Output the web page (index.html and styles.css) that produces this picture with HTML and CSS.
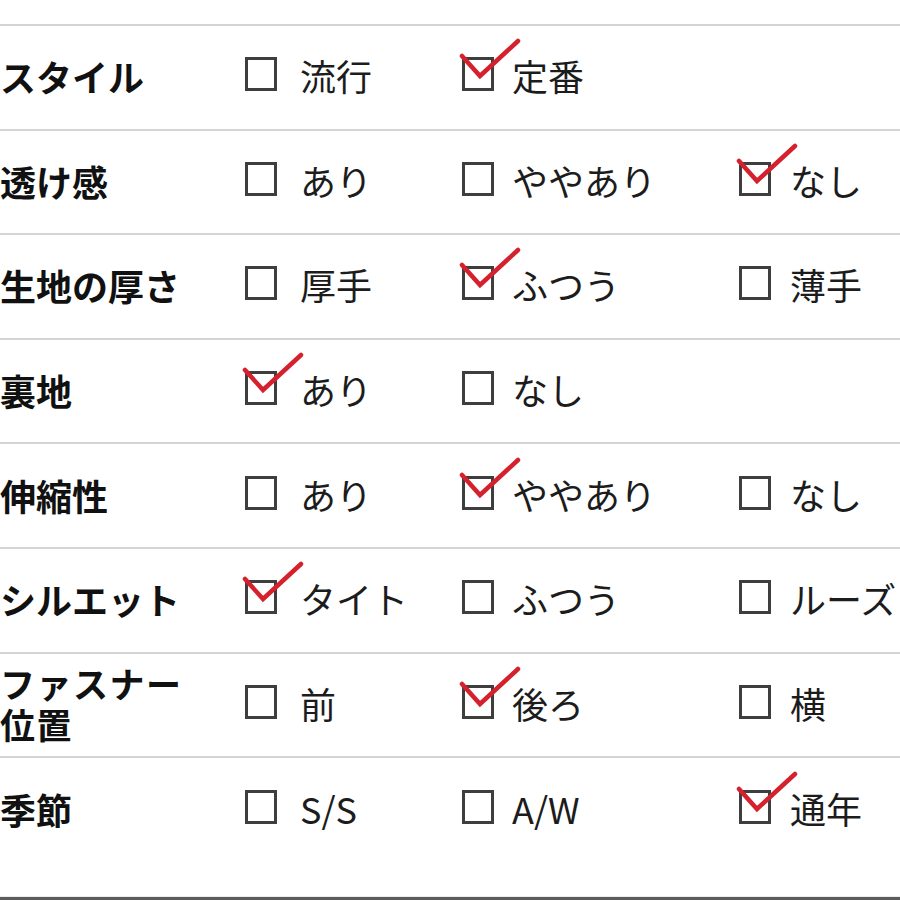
FILE: index.html
```html
<!DOCTYPE html>
<html lang="ja">
<head>
<meta charset="utf-8">
<link rel="stylesheet" href="styles.css">
</head>
<body>
<div class="page">
  <div class="table">
    <div class="row">
      <div class="label">スタイル</div>
      <div class="opt c1"><span class="box"></span><span class="txt">流行</span></div>
      <div class="opt c2"><span class="box on"><svg class="check" viewBox="0 -20 60 44"><polyline points="0,-1 18,19 56,-16"/></svg></span><span class="txt">定番</span></div>
      <div class="opt c3"></div>
    </div>
    <div class="row">
      <div class="label">透け感</div>
      <div class="opt c1"><span class="box"></span><span class="txt">あり</span></div>
      <div class="opt c2"><span class="box"></span><span class="txt">ややあり</span></div>
      <div class="opt c3"><span class="box on"><svg class="check" viewBox="0 -20 60 44"><polyline points="0,-1 18,19 56,-16"/></svg></span><span class="txt">なし</span></div>
    </div>
    <div class="row">
      <div class="label">生地の厚さ</div>
      <div class="opt c1"><span class="box"></span><span class="txt">厚手</span></div>
      <div class="opt c2"><span class="box on"><svg class="check" viewBox="0 -20 60 44"><polyline points="0,-1 18,19 56,-16"/></svg></span><span class="txt">ふつう</span></div>
      <div class="opt c3"><span class="box"></span><span class="txt">薄手</span></div>
    </div>
    <div class="row">
      <div class="label">裏地</div>
      <div class="opt c1"><span class="box on"><svg class="check" viewBox="0 -20 60 44"><polyline points="0,-1 18,19 56,-16"/></svg></span><span class="txt">あり</span></div>
      <div class="opt c2"><span class="box"></span><span class="txt">なし</span></div>
      <div class="opt c3"></div>
    </div>
    <div class="row">
      <div class="label">伸縮性</div>
      <div class="opt c1"><span class="box"></span><span class="txt">あり</span></div>
      <div class="opt c2"><span class="box on"><svg class="check" viewBox="0 -20 60 44"><polyline points="0,-1 18,19 56,-16"/></svg></span><span class="txt">ややあり</span></div>
      <div class="opt c3"><span class="box"></span><span class="txt">なし</span></div>
    </div>
    <div class="row">
      <div class="label">シルエット</div>
      <div class="opt c1"><span class="box on"><svg class="check" viewBox="0 -20 60 44"><polyline points="0,-1 18,19 56,-16"/></svg></span><span class="txt">タイト</span></div>
      <div class="opt c2"><span class="box"></span><span class="txt">ふつう</span></div>
      <div class="opt c3"><span class="box"></span><span class="txt">ルーズ</span></div>
    </div>
    <div class="row">
      <div class="label two"><div class="ln">ファスナー</div><div class="ln">位置</div></div>
      <div class="opt c1"><span class="box"></span><span class="txt">前</span></div>
      <div class="opt c2"><span class="box on"><svg class="check" viewBox="0 -20 60 44"><polyline points="0,-1 18,19 56,-16"/></svg></span><span class="txt">後ろ</span></div>
      <div class="opt c3"><span class="box"></span><span class="txt">横</span></div>
    </div>
    <div class="row last">
      <div class="label">季節</div>
      <div class="opt c1"><span class="box"></span><span class="txt">S/S</span></div>
      <div class="opt c2"><span class="box"></span><span class="txt">A/W</span></div>
      <div class="opt c3"><span class="box on"><svg class="check" viewBox="0 -20 60 44"><polyline points="0,-1 18,19 56,-16"/></svg></span><span class="txt">通年</span></div>
    </div>
  </div>
  <div class="spacer"></div>
  <div class="footer"></div>
</div>
</body>
</html>
```
FILE: styles.css
```css
html, body {
  margin: 0;
  padding: 0;
  background: #ffffff;
}
body {
  width: 900px;
  height: 900px;
  overflow: hidden;
  font-family: "Noto Sans CJK JP", "Noto Sans", sans-serif;
  color: #1c1c1c;
}
.page {
  display: flex;
  flex-direction: column;
  height: 900px;
}
.table {
  padding-top: 24px;
}
.row {
  display: grid;
  grid-template-columns: 245px 217px 277px 1fr;
  align-items: center;
  height: 102.6px;
  border-top: 2px solid #d4d4d4;
}
.row.last {
  height: 104px;
}
.label {
  font-size: 36px;
  font-weight: 700;
  line-height: 40px;
  white-space: nowrap;
  color: #111;
  margin-top: -2px;
}
.label.two {
  display: flex;
  flex-direction: column;
  margin-top: 2px;
  font-family: "Liberation Sans", "Noto Sans CJK JP", sans-serif;
  font-size: 35px;
  letter-spacing: 1.5px;
}
.label.two .ln {
  height: 41px;
  line-height: 41px;
  overflow: visible;
}
.opt {
  display: flex;
  align-items: center;
  font-size: 36px;
  line-height: 40px;
  white-space: nowrap;
  margin-top: -4px;
}
.box {
  position: relative;
  flex: none;
  width: 32px;
  height: 34px;
  border: 3px solid #3e3e3e;
  box-sizing: border-box;
  margin-top: -2px;
}
.check {
  position: absolute;
  left: -3px;
  top: -23px;
  width: 60px;
  height: 44px;
  overflow: visible;
}
.check polyline {
  fill: none;
  stroke: #d5202d;
  stroke-width: 4.5;
  stroke-linecap: round;
  stroke-linejoin: miter;
}
.txt {
  color: #1c1c1c;
}
.c1 .txt { margin-left: 23px; }
.c2 .txt { margin-left: 18px; }
.c3 .txt { margin-left: 19px; }
.spacer {
  flex: 1;
}
.footer {
  height: 3px;
  border-top: 1px solid #ececec;
  background: #5c5c5c;
}
```
